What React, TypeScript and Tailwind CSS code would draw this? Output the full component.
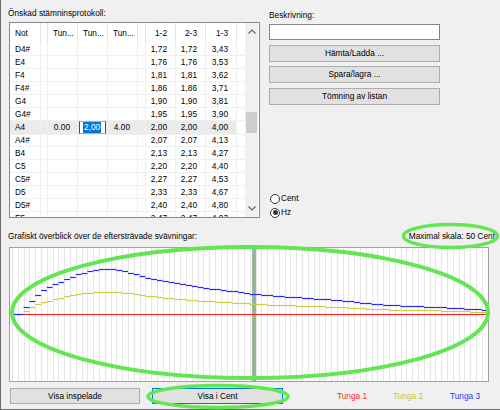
import React from "react";

const rows: string[][] = [
  ["D4#", "", "", "", "1,72", "1,72", "3,43"],
  ["E4", "", "", "", "1,76", "1,76", "3,53"],
  ["F4", "", "", "", "1,81", "1,81", "3,62"],
  ["F4#", "", "", "", "1,86", "1,86", "3,71"],
  ["G4", "", "", "", "1,90", "1,90", "3,81"],
  ["G4#", "", "", "", "1,95", "1,95", "3,90"],
  ["A4", "0.00", "2,00", "4.00", "2,00", "2,00", "4,00"],
  ["A4#", "", "", "", "2,07", "2,07", "4,13"],
  ["B4", "", "", "", "2,13", "2,13", "4,27"],
  ["C5", "", "", "", "2,20", "2,20", "4,40"],
  ["C5#", "", "", "", "2,27", "2,27", "4,53"],
  ["D5", "", "", "", "2,33", "2,33", "4,67"],
  ["D5#", "", "", "", "2,40", "2,40", "4,80"],
  ["E5", "", "", "", "2,47", "2,47", "4,93"],
];

const pts: [number, number][] = [
  [12, 0], [22, 0], [26.5, 7], [32, 13], [38, 19], [44, 24], [50, 27], [58, 31], [67, 35],
  [77, 39], [87, 42], [100, 45], [115, 45], [133, 41], [150, 36], [175, 31], [200, 27],
  [240, 22], [254, 20], [307, 16], [340, 14], [373, 10], [407, 8], [440, 7], [473, 5], [490, 4],
];

function g(x: number): number {
  if (x <= pts[0][0]) return pts[0][1];
  for (let i = 1; i < pts.length; i++) {
    const [x1, y1] = pts[i];
    const [x0, y0] = pts[i - 1];
    if (x <= x1) return y0 + ((y1 - y0) * (x - x0)) / (x1 - x0);
  }
  return pts[pts.length - 1][1];
}

function Chevron({ up }: { up: boolean }) {
  return (
    <svg width="8" height="5" viewBox="0 0 8 5">
      <path
        d={up ? "M0.5 4.5 L4 1 L7.5 4.5" : "M0.5 0.5 L4 4 L7.5 0.5"}
        fill="none"
        stroke="#606060"
        strokeWidth="1.1"
      />
    </svg>
  );
}

function Radio({ checked, label }: { checked: boolean; label: string }) {
  return (
    <div className="flex items-center h-[11px] gap-[1px]">
      <div className="w-[10px] h-[10px] rounded-full border border-[#333333] bg-white flex items-center justify-center">
        {checked && <div className="w-[5px] h-[5px] rounded-full bg-[#333333]" />}
      </div>
      <span className="leading-[11px]">{label}</span>
    </div>
  );
}

const cols = "grid grid-cols-[31px_7px_30px_30px_30px_8px_30px_30px_31px_8px]";

export default function App() {
  const grid: React.ReactNode[] = [];
  for (let i = 0; i <= 82; i++) {
    const x = Math.round(12 + i * 5.8) + 0.5;
    grid.push(<line key={i} x1={x} x2={x} y1={248} y2={381} stroke="#e6e6e6" strokeWidth={1} />);
  }
  const blue: React.ReactNode[] = [];
  const yellow: React.ReactNode[] = [];
  for (let i = 0; i < 82; i++) {
    const xs = 12 + i * 5.8;
    const xe = xs + 5.8;
    const v = g(xs + 2.9);
    const yb = Math.round(314 - v) + 0.5;
    const yy = Math.round(314 - v / 2) + 0.5;
    blue.push(<line key={i} x1={xs} x2={xe} y1={yb} y2={yb} stroke="#2424ff" strokeWidth={1.2} />);
    yellow.push(<line key={i} x1={xs} x2={xe} y1={yy} y2={yy} stroke="#cccc3c" strokeWidth={1.2} />);
  }

  return (
    <div className="relative w-[500px] h-[410px] bg-[#f0f0f0] shadow-[inset_1px_-1px_0_#6e6e6e] font-['Liberation_Sans',Arial,sans-serif] text-[8.3px] text-black overflow-hidden">
      {/* top section */}
      <div className="flex h-[226px]">
        <div className="ml-[9px] w-[251px] flex flex-col">
          <div className="mt-[8px] ml-[-1px] h-[10px] leading-[10px]">Önskad stämninsprotokoll:</div>
          <div className="mt-[4px] h-[196px] border border-[#828790] bg-white flex">
            <div className="w-[235px] flex flex-col overflow-hidden">
              <div className={`${cols} h-[20px] shrink-0`}>
                <div className="border-r border-[#e5e5e5] pl-[5px] leading-[20px]">Not</div>
                <div className="border-r border-[#e5e5e5]" />
                <div className="border-r border-[#e5e5e5] pl-[5px] leading-[20px]">Tun...</div>
                <div className="border-r border-[#e5e5e5] pl-[5px] leading-[20px]">Tun...</div>
                <div className="border-r border-[#e5e5e5] pl-[5px] leading-[20px]">Tun...</div>
                <div className="border-r border-[#e5e5e5]" />
                <div className="border-r border-[#e5e5e5] pr-[8px] text-right leading-[20px]">1-2</div>
                <div className="border-r border-[#e5e5e5] pr-[8px] text-right leading-[20px]">2-3</div>
                <div className="border-r border-[#e5e5e5] pr-[8px] text-right leading-[20px]">1-3</div>
                <div />
              </div>
              {rows.map((r, idx) => {
                const sel = r[0] === "A4";
                const bg = sel ? "bg-[#ebebeb]" : "";
                return (
                  <div key={idx} className={`${cols} h-[13px] shrink-0 leading-[12px]`}>
                    <div className={`${bg} border-r border-b border-[#f0f0f0] pl-[5px]`}>{r[0]}</div>
                    <div className={`${bg} border-r border-b border-[#f0f0f0]`} />
                    <div className={`${bg} border-r border-b border-[#f0f0f0] pr-[7px] text-right`}>{r[1]}</div>
                    <div className={`${bg} border-r border-b border-[#f0f0f0]`}>
                      {sel ? (
                        <div className="h-[13px] mx-[1px] border-x border-x-[#505050] border-y border-y-[#b0b0b0] bg-white flex items-center pl-[3px]">
                          <span className="bg-[#0078d7] text-white leading-[11px] px-[1px]">{r[2]}</span>
                        </div>
                      ) : null}
                    </div>
                    <div className={`${bg} border-r border-b border-[#f0f0f0] pr-[7px] text-right`}>{r[3]}</div>
                    <div className={`${bg} border-r border-b border-[#f0f0f0]`} />
                    <div className={`${bg} border-r border-b border-[#f0f0f0] pr-[8px] text-right`}>{r[4]}</div>
                    <div className={`${bg} border-r border-b border-[#f0f0f0] pr-[8px] text-right`}>{r[5]}</div>
                    <div className={`${bg} border-r border-b border-[#f0f0f0] pr-[8px] text-right`}>{r[6]}</div>
                    <div className="border-b border-[#f0f0f0]" />
                  </div>
                );
              })}
            </div>
            <div className="w-[13px] bg-[#f0f0f0] flex flex-col">
              <div className="h-[17px] flex items-center justify-center">
                <Chevron up />
              </div>
              <div className="flex-1">
                <div className="mt-[72px] mx-[1px] h-[21px] bg-[#cdcdcd]" />
              </div>
              <div className="h-[17px] flex items-center justify-center">
                <Chevron up={false} />
              </div>
            </div>
          </div>
        </div>
        <div className="ml-[9px] w-[171px] flex flex-col">
          <div className="mt-[10px] h-[10px] leading-[10px]">Beskrivning:</div>
          <div className="mt-[4px] h-[16px] bg-white border border-[#858585]" />
          <div className="mt-[5px] h-[17px] bg-[#e1e1e1] border border-[#adadad] flex items-center justify-center">Hämta/Ladda ...</div>
          <div className="mt-[4px] h-[17px] bg-[#e1e1e1] border border-[#adadad] flex items-center justify-center">Spara/lagra ...</div>
          <div className="mt-[5px] h-[17px] bg-[#e1e1e1] border border-[#adadad] flex items-center justify-center">Tömning av listan</div>
          <div className="mt-[88px] flex flex-col gap-[3px] ml-[1px]">
            <Radio checked={false} label="Cent" />
            <Radio checked label="Hz" />
          </div>
        </div>
      </div>

      {/* chart label row */}
      <div className="h-[20px] flex items-center justify-between pl-[8px] pr-[5px]">
        <span>Grafiskt överblick över de eftersträvade svävningar:</span>
        <span>Maximal skala: 50 Cent</span>
      </div>

      {/* chart */}
      <div className="ml-[9px] mt-[1px] w-[480px] h-[135px] border border-[#a0a0a0] bg-white">
        <svg width="478" height="133" viewBox="10 248 478 133" className="block">
          {grid}
          <rect x={252} y={248} width={4} height={133} fill="#97b597" />
          <line x1={12} x2={488} y1={314.5} y2={314.5} stroke="#ff1a1a" strokeWidth={1} />
          {yellow}
          {blue}
        </svg>
      </div>

      {/* bottom row */}
      <div className="mt-[6px] h-[16px] flex items-center">
        <div className="ml-[10px] w-[130px] h-[16px] bg-[#e1e1e1] border border-[#adadad] flex items-center justify-center">Visa inspelade</div>
        <div className="ml-[12px] w-[131px] h-[16px] bg-[#e1e1e1] border border-[#0078d7] flex items-center justify-center">Visa i Cent</div>
        <div className="ml-[54px] flex">
          <span className="w-[56px] text-[#ff2a2a]">Tunga 1</span>
          <span className="w-[57px] text-[#c9c942]">Tunga 2</span>
          <span className="w-[40px] text-[#3030ff]">Tunga 3</span>
        </div>
      </div>

      {/* annotation overlay */}
      <svg className="absolute left-0 top-0 pointer-events-none" width="500" height="410" viewBox="0 0 500 410">
        <ellipse cx={250} cy={312.5} rx={238} ry={65.5} fill="none" stroke="#62e652" strokeWidth={4} />
        <ellipse cx={450.5} cy={236} rx={47} ry={11.5} fill="none" stroke="#62e652" strokeWidth={3.5} />
        <ellipse cx={218} cy={396.5} rx={70} ry={11} fill="none" stroke="#62e652" strokeWidth={3.5} />
      </svg>
    </div>
  );
}
